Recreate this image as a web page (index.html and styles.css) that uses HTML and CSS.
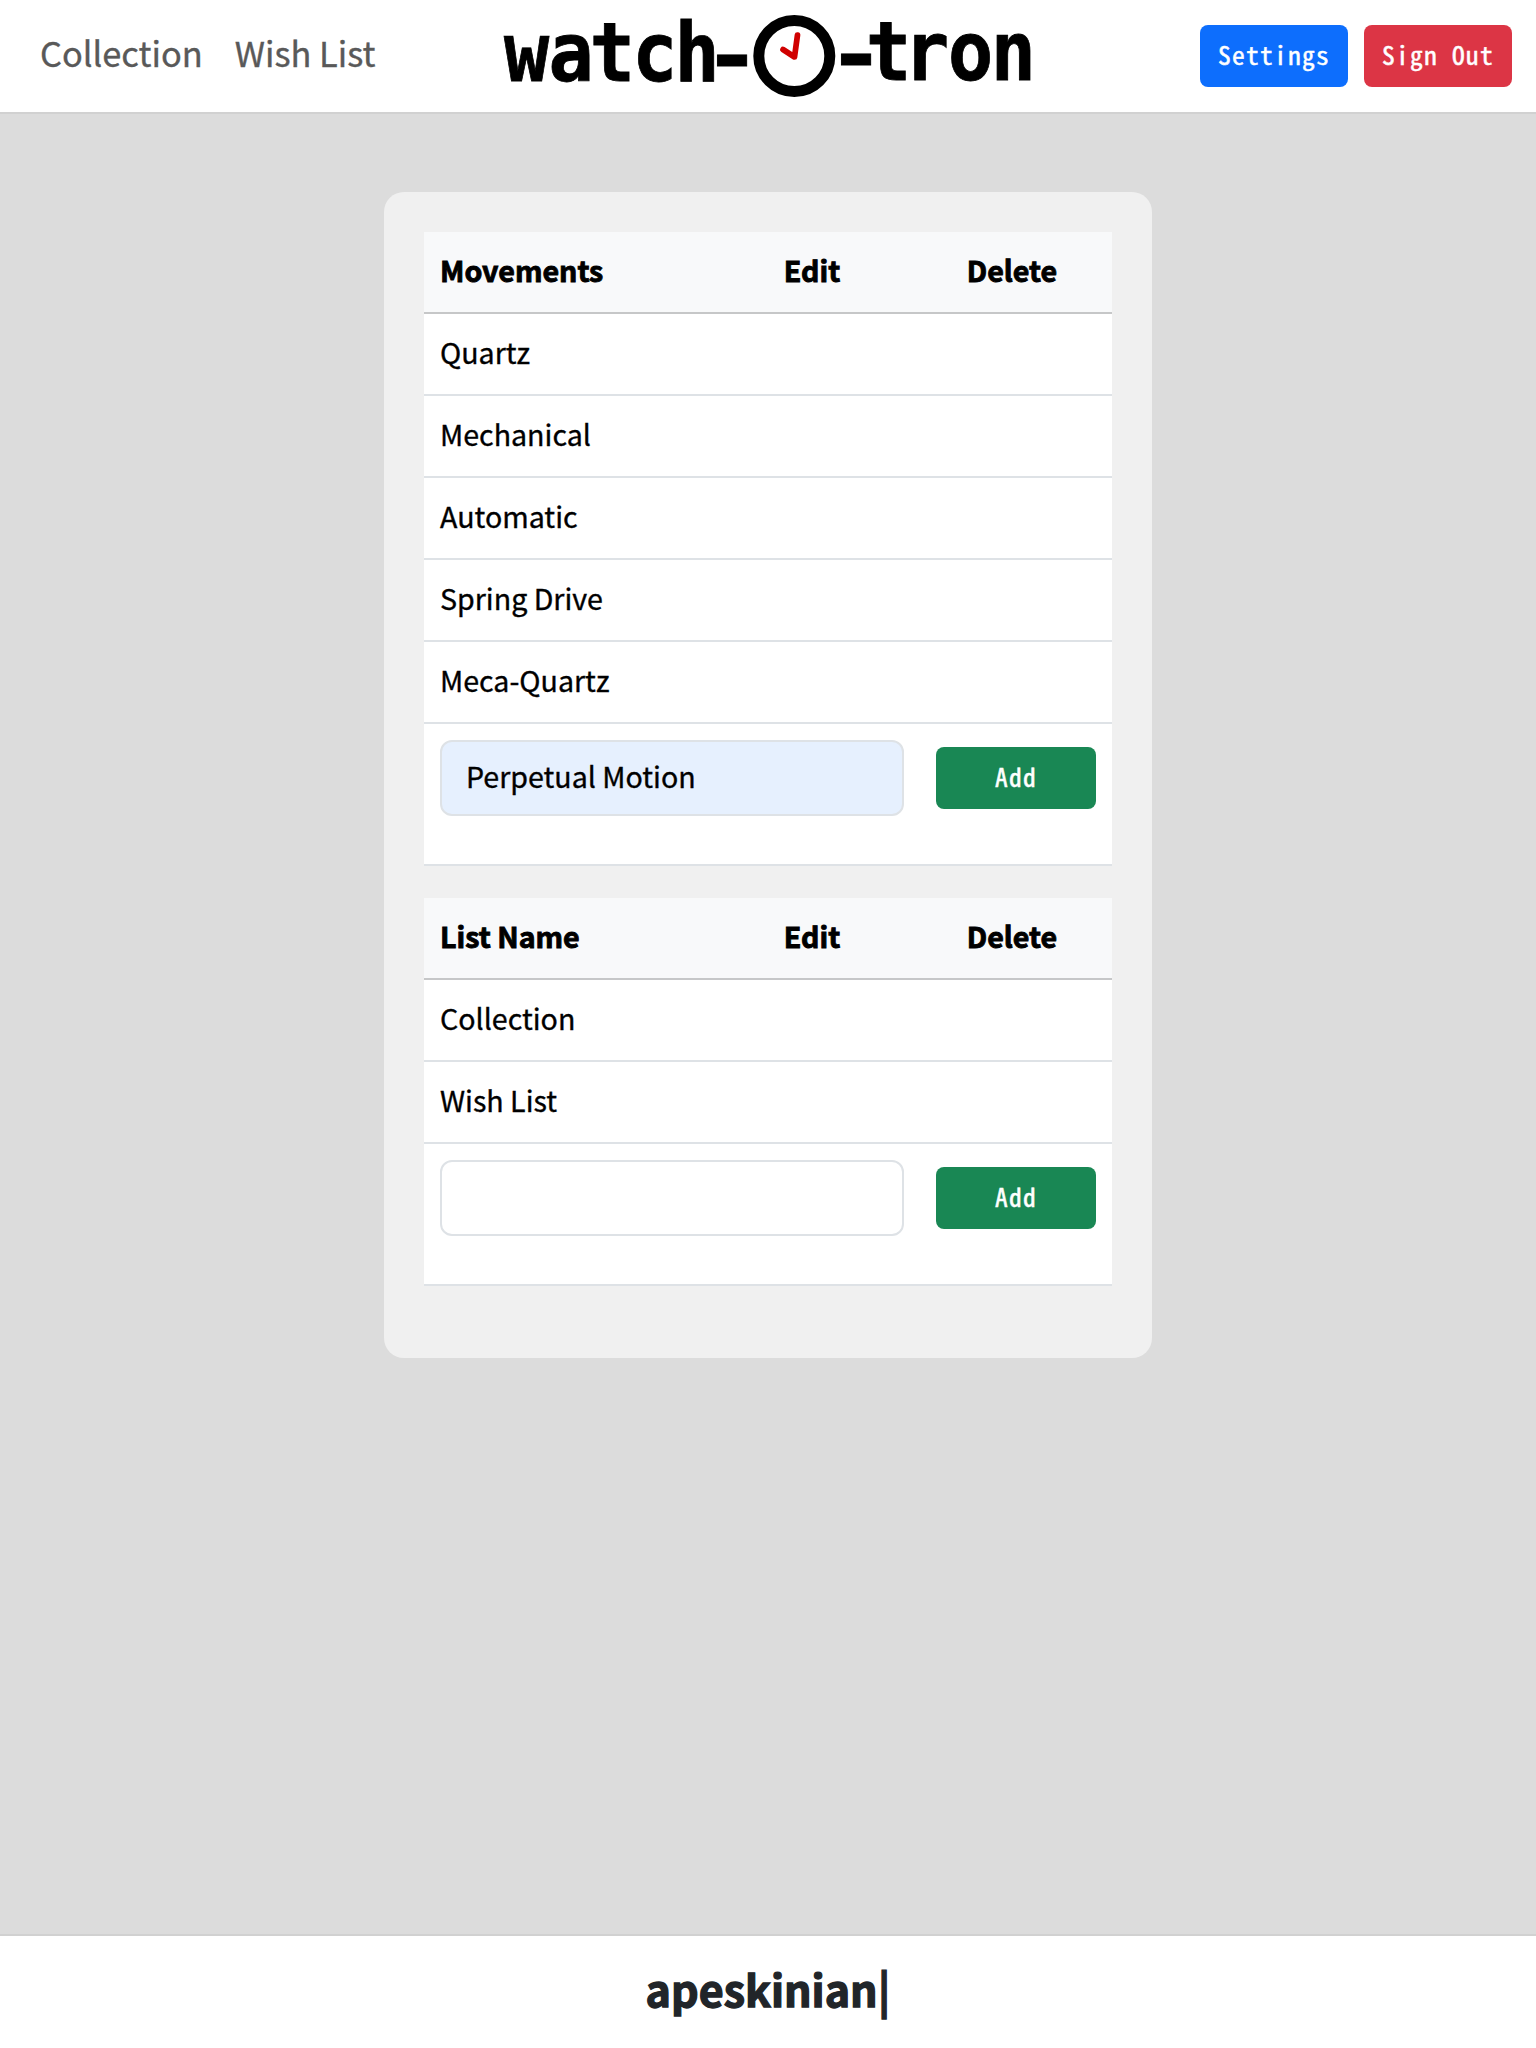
FILE: index.html
```html
<!DOCTYPE html>
<html lang="en">
<head>
<meta charset="utf-8">
<title>watch-O-tron</title>
<link rel="stylesheet" href="styles.css">
</head>
<body>
<header class="topbar">
  <nav class="links"><a>Collection</a><a>Wish List</a></nav>
  <svg class="logo" width="530" height="100" viewBox="0 0 530 100" role="img" aria-label="watch-O-tron">
    <g class="wordmark">
      <text transform="translate(0 80.5) scale(.95 1.03)" x="1 48 91.3 136 180.5">watch</text>
      <text transform="translate(200.5 83) scale(1.2 1)">-</text>
      <text transform="translate(324.5 82) scale(1.2 1)">-</text>
      <text transform="translate(0 80) scale(.95 1.03)" x="382 422 468.5 513.5">tron</text>
    </g>
    <circle class="clock-ring" cx="291.3" cy="56" r="35.5"/>
    <path class="clock-hands" d="M294.5 35L291.5 57L280 49.5"/>
  </svg>
  <div class="actions"><button class="btn blue">Settings</button><button class="btn red">Sign Out</button></div>
</header>
<main>
  <section class="card">
    <table>
      <thead><tr><th class="name">Movements</th><th>Edit</th><th>Delete</th></tr></thead>
      <tbody>
        <tr><td colspan="3">Quartz</td></tr>
        <tr><td colspan="3">Mechanical</td></tr>
        <tr><td colspan="3">Automatic</td></tr>
        <tr><td colspan="3">Spring Drive</td></tr>
        <tr><td colspan="3">Meca-Quartz</td></tr>
        <tr><td colspan="3" class="add"><form><input class="filled" value="Perpetual Motion"><button type="button" class="btn green">Add</button></form></td></tr>
      </tbody>
    </table>
    <table>
      <thead><tr><th class="name">List Name</th><th>Edit</th><th>Delete</th></tr></thead>
      <tbody>
        <tr><td colspan="3">Collection</td></tr>
        <tr><td colspan="3">Wish List</td></tr>
        <tr><td colspan="3" class="add"><form><input><button type="button" class="btn green">Add</button></form></td></tr>
      </tbody>
    </table>
  </section>
</main>
<footer><strong>apeskinian|</strong></footer>
</body>
</html>
```
FILE: styles.css
```css
* { box-sizing: border-box; }
body {
  margin: 0;
  height: 2048px;
  display: flex;
  flex-direction: column;
  background: #dcdcdc;
  color: #000;
  font: 28.6px/48px "Noto Sans CJK SC", "Noto Sans", sans-serif;
  -webkit-text-stroke: .35px currentColor;
}
.topbar {
  height: 114px;
  flex: none;
  display: grid;
  grid-template-columns: 1fr 530px 1fr;
  background: #fff;
  border-bottom: 2px solid #d1d1d1;
}
.links {
  display: flex;
  gap: 32px;
  padding: 22px 0 0 40px;
  font-size: 34.4px;
  line-height: 60px;
  color: #595959;
}
.logo { display: block; overflow: visible; -webkit-text-stroke: 0; }
.wordmark {
  font: bold 79px "DejaVu Sans Mono", monospace;
  fill: #000;
  stroke: #000;
  stroke-width: .8;
}
.clock-ring { fill: none; stroke: #000; stroke-width: 11; }
.clock-hands {
  fill: none;
  stroke: #d00000;
  stroke-width: 5.7;
  stroke-linecap: round;
  stroke-linejoin: round;
}
.actions {
  display: flex;
  justify-content: flex-end;
  gap: 16px;
  padding: 25px 24px 0 0;
}
.btn {
  width: 148px;
  height: 62px;
  padding: 0 0 4px;
  border: 0;
  border-radius: 8px;
  color: #fff;
  font: 25.4px/58px "Noto Sans Mono CJK SC", "DejaVu Sans Mono", monospace;
  letter-spacing: 1.3px;
  white-space: nowrap;
  -webkit-text-stroke: .5px #fff;
}
.blue { background: #0d6efd; }
.red { background: #dc3545; }
.green { width: 160px; background: #198754; }
main { flex: 1; padding-top: 78px; }
.card {
  width: 768px;
  height: 1166px;
  margin: 0 auto;
  padding: 40px;
  border-radius: 20px;
  background: #f0f0f0;
}
table {
  width: 688px;
  margin-bottom: 32px;
  border-collapse: separate;
  border-spacing: 0;
  table-layout: fixed;
}
th, td {
  height: 82px;
  padding: 0 16px 4px;
  background: #fff;
  border-bottom: 2px solid #dee2e6;
  text-align: left;
}
th {
  width: 200px;
  background: #f8f9fa;
  border-color: #c6c7c8;
  font-weight: 700;
  text-align: center;
  -webkit-text-stroke: .9px #000;
}
th.name { width: 288px; text-align: left; }
td.add { height: 142px; padding-top: 16px; vertical-align: top; }
form { display: flex; align-items: center; gap: 32px; }
input {
  width: 464px;
  height: 76px;
  padding: 0 24px 5px;
  border: 2px solid #dee2e6;
  border-radius: 12px;
  background: #fff;
  color: #000;
  font: inherit;
  -webkit-text-stroke: inherit;
}
.filled { background: #e6f0fe; }
footer {
  height: 114px;
  flex: none;
  padding-top: 22px;
  background: #fff;
  border-top: 2px solid #d1d1d1;
  color: #212529;
  font-size: 43px;
  line-height: 60px;
  text-align: center;
  -webkit-text-stroke: 1.3px #212529;
}
```
